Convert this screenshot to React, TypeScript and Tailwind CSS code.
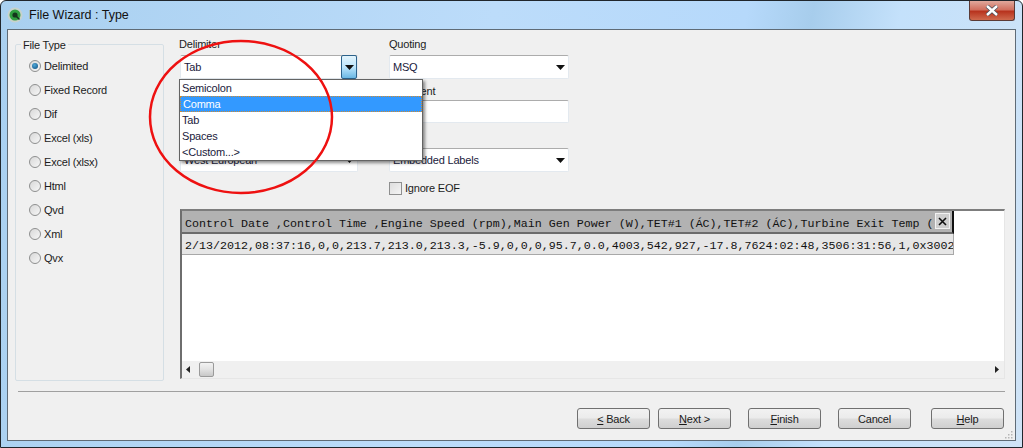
const radios = ["Delimited", "Fixed Record", "Dif", "Excel (xls)", "Excel (xlsx)", "Html", "Qvd", "Xml", "Qvx"];
const options = ["Semicolon", "Comma", "Tab", "Spaces", "<Custom...>"];
const header = "Control Date ,Control Time ,Engine Speed (rpm),Main Gen Power (W),TET#1 (ÁC),TET#2 (ÁC),Turbine Exit Temp (";
const row = "2/13/2012,08:37:16,0,0,213.7,213.0,213.3,-5.9,0,0,0,95.7,0.0,4003,542,927,-17.8,7624:02:48,3506:31:56,1,0x3002";

const Arrow = () => (
  <svg width="9" height="5" viewBox="0 0 9 5" className="shrink-0">
    <path d="M0 0h9L4.5 5z" fill="#111" />
  </svg>
);

const Combo = ({ value, active }: { value?: string; active?: boolean }) => (
  <div className={`flex h-[24px] items-center bg-white border border-[#e3e9ef] border-t-[#acacac] rounded-[2px] pl-[3px] ${active ? "border-[#7da2ce] border-t-[#7da2ce]" : "pr-[3px]"}`}>
    <span className="flex-1 text-[#1a1a3c]">{value}</span>
    {active ? (
      <div className="flex h-[24px] w-[16px] items-center justify-center rounded-[2px] border border-[#2c628b] bg-[linear-gradient(#e3f4fc,#bde6fd_50%,#6bb8e4)]">
        <Arrow />
      </div>
    ) : (
      <Arrow />
    )}
  </div>
);

const Button = ({ label, mnemonic, rest, className }: { label?: string; mnemonic?: string; rest?: string; className?: string }) => (
  <button className={`flex h-[21px] w-[73px] items-center justify-center rounded-[3px] border border-[#707070] bg-[linear-gradient(#f2f2f2,#ebebeb_48%,#dddddd_52%,#cfcfcf)] text-[#1a1a1a] ${className ?? ""}`}>
    <span className="whitespace-pre">
      {label}
      {mnemonic && <span className="underline">{mnemonic}</span>}
      {rest}
    </span>
  </button>
);

export default function App() {
  return (
    <div className="relative h-[448px] w-[1023px] overflow-hidden rounded-t-[6px] border border-[#20262c] bg-[linear-gradient(100deg,#a9d0f0,#bcdcfa_45%,#b6d9fb_68%,#a7cdec_74%,#c4e1fb_82%,#cfe3f6)] px-[6px] font-['Liberation_Sans',sans-serif] text-[11px] leading-[14px] tracking-[-0.2px] text-[#1c1c1c]">
      {/* title bar */}
      <div className="flex h-[28px] items-center gap-[6px]">
        <svg width="16" height="16" viewBox="0 0 16 16">
          <circle cx="8" cy="8" r="7.5" fill="#c8d2cc" />
          <circle cx="8" cy="8" r="5.5" fill="#2f9e3f" />
          <circle cx="8" cy="8" r="2.6" fill="#14351c" />
          <path d="M9.5 9.5l3 3" stroke="#14351c" strokeWidth="1.6" />
        </svg>
        <span className="text-[12.5px] tracking-normal text-[#111]">File Wizard : Type</span>
        <div className="ml-auto -mt-[8px] mr-[1px] flex h-[20px] w-[46px] items-center justify-center rounded-b-[3px] border border-t-0 border-[#5a3a36] bg-[linear-gradient(#e0a89c,#d1705f_45%,#b8341f_55%,#cf6a4e)]">
          <svg width="14" height="11" viewBox="0 0 14 11">
            <path d="M2 1l10 9M12 1L2 10" stroke="#4a4f5a" strokeWidth="4" />
            <path d="M2 1l10 9M12 1L2 10" stroke="#fff" strokeWidth="2.4" />
          </svg>
        </div>
      </div>

      {/* client area */}
      <div className="relative flex h-[412px] flex-col border border-[#5f6b76] bg-[#f0f0f0]">
        <div className="flex gap-[16px] pl-[7px]">
          {/* file type group */}
          <div className="relative mt-[14px] h-[337px] w-[149px] rounded-[2px] border border-[#d5dfe5] pl-[13px] pt-[13px]">
            <span className="absolute -top-[7px] left-[5px] bg-[#f0f0f0] px-[2px]">File Type</span>
            <div className="flex flex-col gap-[8px]">
              {radios.map((label, i) => (
                <div key={label} className="flex h-[16px] items-center gap-[3px]">
                  <div className="flex h-[12px] w-[12px] items-center justify-center rounded-full border border-[#8e8f8f] bg-[linear-gradient(135deg,#d8d8d8,#f6f6f6)]">
                    {i === 0 && <div className="h-[6px] w-[6px] rounded-full bg-[radial-gradient(circle_at_40%_35%,#4fa8d8,#0b4a7c)]" />}
                  </div>
                  <span>{label}</span>
                </div>
              ))}
            </div>
          </div>

          {/* options and preview */}
          <div className="flex w-[825px] flex-col pt-[7px]">
            <div className="grid grid-cols-[178px_180px] gap-x-[31px]">
              <div className="-ml-px flex h-[18px] items-start">Delimiter</div>
              <div className="flex h-[18px] items-start">Quoting</div>
              <Combo value="Tab" active />
              <Combo value="MSQ" />
              <div className="mt-[5px] h-[16px]" />
              <div className="mt-[5px] flex h-[16px] items-start">Comment</div>
              <Combo />
              <div className="h-[23px] rounded-[2px] border border-[#e3e9ef] border-t-[#acacac] bg-white" />
              <div className="mt-[7px] h-[17px]" />
              <div className="mt-[7px] h-[17px]" />
              <Combo value="West European" />
              <Combo value="Embedded Labels" />
              <div />
              <div className="mt-[8px] flex h-[16px] items-center gap-[3px]">
                <div className="h-[13px] w-[13px] border border-[#8e8f8f] bg-[linear-gradient(135deg,#dedede,#f4f4f4)]" />
                <span>Ignore EOF</span>
              </div>
            </div>

            {/* preview table */}
            <div className="mt-[13px] flex h-[170px] flex-col border-2 border-b border-r border-[#7d7d7d] border-r-[#e6e6e6] border-b-[#e6e6e6] border-l-[#6e6e6e] bg-white font-['Liberation_Mono',monospace] text-[11.67px] tracking-normal text-[#111]">
              <div className="flex-1">
                <div className="relative h-[23px] w-[772px] overflow-hidden border-b-2 border-r-2 border-[#6b6b6b] border-r-[#111] bg-[#b2b2b2] pl-[3px] pt-[6px] whitespace-nowrap">
                  {header}
                  <div className="absolute right-[2px] top-[2px] flex h-[16px] w-[15px] items-center justify-center border border-[#f2f2f2] bg-[#cfcfcf]">
                    <svg width="9" height="9" viewBox="0 0 9 9">
                      <path d="M1 1l7 7M8 1L1 8" stroke="#111" strokeWidth="1.6" />
                    </svg>
                  </div>
                </div>
                <div className="h-[21px] w-[772px] overflow-hidden border-b border-r border-[#a8a8a8] bg-[#e6e6e6] pl-[3px] pt-[5px] whitespace-nowrap">{row}</div>
              </div>
              <div className="flex h-[17px] items-center justify-between bg-[#f0f0f0] pl-[4px] pr-[5px]">
                <div className="flex items-center gap-[9px]">
                  <svg width="4" height="7" viewBox="0 0 4 7">
                    <path d="M4 0v7L0 3.5z" fill="#222" />
                  </svg>
                  <div className="h-[15px] w-[15px] rounded-[2px] border border-[#9a9a9a] bg-[linear-gradient(#f2f2f2,#e4e4e4_45%,#c8c8c8)]" />
                </div>
                <svg width="4" height="7" viewBox="0 0 4 7">
                  <path d="M0 0v7l4-3.5z" fill="#222" />
                </svg>
              </div>
            </div>
          </div>
        </div>

        {/* separator and wizard buttons */}
        <div className="mx-[10px] mt-[10px] border-t border-[#a0a0a0]" />
        <div className="mt-[16px] flex justify-end pr-[11px]">
          <Button mnemonic="<" rest=" Back" />
          <Button mnemonic="N" rest="ext >" className="ml-[8px]" />
          <Button mnemonic="F" rest="inish" className="ml-[17px]" />
          <Button label="Cancel" className="ml-[17px]" />
          <Button mnemonic="H" rest="elp" className="ml-[20px]" />
        </div>

        {/* size grip */}
        <svg width="8" height="8" viewBox="0 0 8 8" className="absolute bottom-[1px] right-[2px]">
          <path d="M6 0h1.5v1.5H6zM3 3h1.5v1.5H3zM6 3h1.5v1.5H6zM0 6h1.5v1.5H0zM3 6h1.5v1.5H3zM6 6h1.5v1.5H6z" fill="#b5b5b5" />
        </svg>

        {/* open dropdown */}
        <div className="absolute left-[171px] top-[49px] w-[244px] border border-[#646464] bg-white shadow-[2px_2px_3px_rgba(0,0,0,0.45)]">
          {options.map((option) => (
            <div key={option} className={`flex h-[16px] items-center pl-[2px] ${option === "Comma" ? "border border-dotted border-[#d08a30] bg-[#3399ff] pl-[1px] text-white" : "text-[#1a1a3c]"}`}>
              {option}
            </div>
          ))}
        </div>

        {/* red annotation circle */}
        <svg width="190" height="158" viewBox="0 0 190 158" className="absolute left-[138px] top-[8px] pointer-events-none">
          <ellipse cx="95" cy="79" rx="91" ry="76" fill="none" stroke="#ee1111" strokeWidth="2.5" />
        </svg>
      </div>
    </div>
  );
}
